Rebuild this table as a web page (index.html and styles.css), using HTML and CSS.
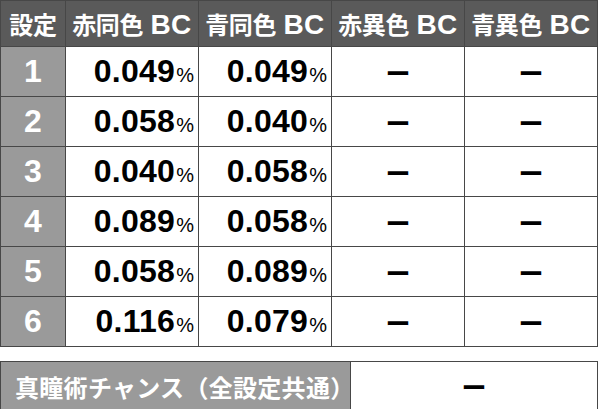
FILE: index.html
```html
<!DOCTYPE html>
<html lang="ja">
<head>
<meta charset="utf-8">
<link rel="stylesheet" href="styles.css">
</head>
<body>
<table class="rates">
  <colgroup>
    <col class="c-set"><col class="c-val"><col class="c-val"><col class="c-val"><col class="c-val">
  </colgroup>
  <thead>
    <tr>
      <th>設定</th>
      <th>赤同色 <span class="bc">BC</span></th>
      <th>青同色 <span class="bc">BC</span></th>
      <th>赤異色 <span class="bc">BC</span></th>
      <th>青異色 <span class="bc">BC</span></th>
    </tr>
  </thead>
  <tbody>
    <tr><td class="set">1</td><td class="num">0.049<small>%</small></td><td class="num">0.049<small>%</small></td><td class="dash">ー</td><td class="dash">ー</td></tr>
    <tr><td class="set">2</td><td class="num">0.058<small>%</small></td><td class="num">0.040<small>%</small></td><td class="dash">ー</td><td class="dash">ー</td></tr>
    <tr><td class="set">3</td><td class="num">0.040<small>%</small></td><td class="num">0.058<small>%</small></td><td class="dash">ー</td><td class="dash">ー</td></tr>
    <tr><td class="set">4</td><td class="num">0.089<small>%</small></td><td class="num">0.058<small>%</small></td><td class="dash">ー</td><td class="dash">ー</td></tr>
    <tr><td class="set">5</td><td class="num">0.058<small>%</small></td><td class="num">0.089<small>%</small></td><td class="dash">ー</td><td class="dash">ー</td></tr>
    <tr><td class="set">6</td><td class="num">0.116<small>%</small></td><td class="num">0.079<small>%</small></td><td class="dash">ー</td><td class="dash">ー</td></tr>
  </tbody>
</table>
<table class="chance">
  <colgroup><col class="c-label"><col></colgroup>
  <tr>
    <th>真瞳術チャンス（全設定共通）</th>
    <td class="dash">ー</td>
  </tr>
</table>
</body>
</html>
```

FILE: styles.css
```css
html, body {
  margin: 0;
  padding: 0;
  background: #fff;
}
body {
  font-family: "Liberation Sans", "Noto Sans CJK JP", sans-serif;
  font-weight: bold;
}
table {
  border-collapse: collapse;
  table-layout: fixed;
}
.rates {
  width: 598px;
}
.c-set { width: 65px; }
.c-val { width: 133px; }
.rates th, .rates td, .chance th, .chance td {
  border: 1px solid #474747;
  padding: 0;
}
.rates th {
  height: 45px;
  background: #5a5a5a;
  color: #fff;
  font-family: "Noto Sans CJK JP", sans-serif;
  font-size: 24px;
  font-weight: bold;
  text-align: center;
  white-space: nowrap;
  letter-spacing: -0.3px;
  word-spacing: 2px;
}
.bc {
  font-family: "Liberation Sans", sans-serif;
  font-size: 28px;
  letter-spacing: 0.5px;
}
.rates td {
  height: 49px;
}
.set {
  background: #9a9a9a;
  color: #fff;
  font-size: 32px;
  text-align: center;
}
.num {
  text-align: right;
  padding-right: 4px !important;
  color: #000;
  font-size: 32px;
  letter-spacing: 0.3px;
}
.num small {
  font-size: 20px;
  font-weight: normal;
  letter-spacing: 0;
  margin-left: 1px;
}
.dash {
  text-align: center;
  font-family: "Noto Sans CJK JP", sans-serif;
  font-size: 25px;
  font-weight: bold;
  color: #000;
}
.chance {
  width: 598px;
  margin-top: 14px;
}
.c-label { width: 350px; }
.chance th {
  height: 48px;
  background: #9a9a9a;
  color: #fff;
  font-family: "Noto Sans CJK JP", sans-serif;
  font-size: 24px;
  font-weight: bold;
  text-align: left;
  padding-left: 14px;
  white-space: nowrap;
  letter-spacing: 0.3px;
}
```
